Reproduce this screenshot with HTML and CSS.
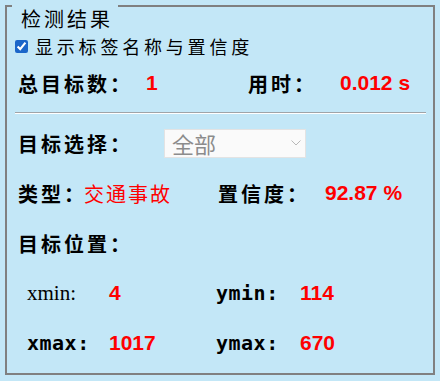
FILE: index.html
```html
<!DOCTYPE html>
<html lang="zh-CN">
<head>
	<meta charset="UTF-8">
	<title>检测结果</title>
	<link rel="stylesheet" href="styles.css">
</head>
<body>
	<fieldset class="panel">
		<legend class="panel-title">检测结果</legend>
		<label class="check-row"><input type="checkbox" checked>显示标签名称与置信度</label>
		<div class="row stat-row">
			<span class="label">总目标数：</span>
			<span class="num">1</span>
			<span class="label">用时：</span>
			<span class="num">0.012 s</span>
		</div>
		<hr class="sep">
		<div class="row select-row">
			<span class="label">目标选择：</span>
			<div class="combo">
				<span>全部</span>
				<svg width="10" height="6" viewBox="0 0 10 6"><path d="M0.5 0.5 L5 5 L9.5 0.5" fill="none" stroke="#b8b8b8" stroke-width="1"/></svg>
			</div>
		</div>
		<div class="row type-row">
			<span class="label">类型：</span>
			<span class="type">交通事故</span>
			<span class="label">置信度：</span>
			<span class="num">92.87 %</span>
		</div>
		<div class="row">
			<span class="label">目标位置：</span>
		</div>
		<div class="row coord-row">
			<span class="coord-serif">xmin:</span>
			<span class="num">4</span>
			<span class="coord">ymin:</span>
			<span class="num">114</span>
		</div>
		<div class="row coord-row">
			<span class="coord">xmax:</span>
			<span class="num">1017</span>
			<span class="coord">ymax:</span>
			<span class="num">670</span>
		</div>
	</fieldset>
</body>
</html>
```

FILE: styles.css
```css
*{
	box-sizing: border-box;
}
body{
	margin: 0;
	padding: 0;
	background: #c3e7f7;
	color: #000;
	font-family: "Noto Sans CJK SC", sans-serif;
}
.panel{
	margin: -20px 5px 0 5px;
	padding: 2px 7px 5px 8px;
	border: 2px solid #808080;
	min-width: 0;
}
.panel-title{
	margin-left: -3px;
	padding: 26px 5px 0 9px;
	font-size: 20px;
	line-height: 26px;
	letter-spacing: 3px;
}
.check-row{
	display: flex;
	align-items: center;
	height: 24px;
	gap: 7px;
	font-size: 18px;
	letter-spacing: 3.8px;
}
.check-row input{
	margin: 0;
	width: 13px;
	height: 13px;
	accent-color: #1b66c9;
}
.row{
	display: grid;
	align-items: center;
	height: 50px;
	padding-left: 3px;
}
.stat-row{
	height: 30px;
	margin-top: 10px;
	grid-template-columns: 128px 102px 92px auto;
}
.select-row{
	grid-template-columns: 146px auto;
}
.type-row{
	grid-template-columns: 66px 134px 107px auto;
}
.coord-row{
	padding-left: 12px;
	grid-template-columns: 82px 107px 84px auto;
}
.label{
	font-size: 20px;
	font-weight: bold;
	letter-spacing: 3px;
	white-space: nowrap;
}
.num{
	font-family: "Liberation Sans", Arial, sans-serif;
	font-size: 21px;
	font-weight: bold;
	color: #ff0000;
	white-space: nowrap;
}
.type{
	font-size: 20px;
	letter-spacing: 2px;
	color: #ff0000;
	white-space: nowrap;
}
.coord-serif{
	font-family: "Liberation Serif", serif;
	font-size: 21px;
}
.coord{
	font-family: "DejaVu Sans Mono", monospace;
	font-size: 20px;
	letter-spacing: 0.5px;
	font-weight: bold;
}
.sep{
	margin: 14px 0 4px 0;
	height: 2px;
	border: 0;
	border-top: 1px solid #a0a4a8;
	border-bottom: 1px solid #ffffff;
}
.combo{
	display: flex;
	align-items: center;
	justify-content: space-between;
	width: 142px;
	height: 29px;
	padding: 0 4px 0 7px;
	background: #fafafa;
	border: 1px solid #e3e3e3;
	font-size: 22px;
	color: #8c8c8c;
}
```
